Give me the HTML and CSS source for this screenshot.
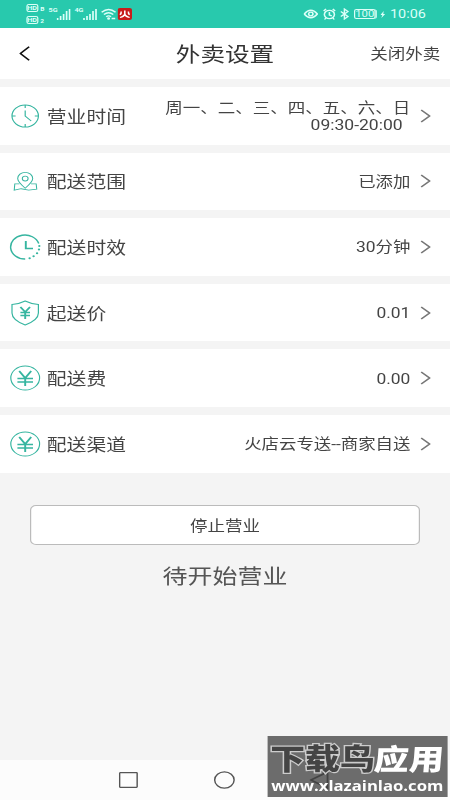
FILE: index.html
```html
<!DOCTYPE html>
<html lang="zh-CN">
<head>
<meta charset="utf-8">
<title>外卖设置</title>
<link rel="stylesheet" href="styles.css">
</head>
<body>
<svg class="defs" aria-hidden="true">
  <symbol id="chevron" viewBox="0 0 9 14"><path d="M1 1 8 7 1 13"/></symbol>
  <symbol id="yuan" viewBox="0 0 26 26"><circle cx="13" cy="13" r="12"/><path class="thick" d="M8 6l5 7 5-7M13 13v8M6.500 13.500h13M6.500 17h13"/></symbol>
</svg>
<div class="screen">
  <div class="status">
    <div class="hd"><span><b>HD</b><i>B</i></span><span><b>HD</b><i>2</i></span></div>
    <div class="net net5">5G</div>
    <svg class="signal" viewBox="0 0 12 12"><path d="M1 12v-2M3.500 12V8M6 12V6M8.500 12V3M11 12V1"/></svg>
    <div class="net net4">4G</div>
    <svg class="signal" viewBox="0 0 12 12"><path d="M1 12v-2M3.500 12V8M6 12V6M8.500 12V3M11 12V1"/></svg>
    <svg class="wifi" viewBox="0 0 13 12"><path d="M.7 4.300Q6.500-1.300 12.300 4.300M2.600 6.600q3.900-3.600 7.800 0M4.500 8.800q2-1.800 4 0M9 10.500h3"/><circle cx="6.500" cy="10.500" r=".6"/></svg>
    <svg class="fire" viewBox="0 0 12 12"><rect width="12" height="12" rx="2"/><path d="M6 2.500V6Q5.500 8.500 2 9.500M6 6q.5 2.500 4 3.500M3 3.500q.2 2-1 3.300M9 3.500q-.2 2 1 3.300"/></svg>
    <div class="spacer"></div>
    <svg class="eye" viewBox="0 0 12 10"><path d="M.5 5Q6-2.500 11.500 5 6 12.500.5 5z"/><circle cx="6" cy="5" r="1.800"/></svg>
    <svg class="alarm" viewBox="0 0 11 12"><circle cx="5.500" cy="6.500" r="4.200"/><path d="M5.500 4v3l2 .8M.7 3l2-2M10.300 3l-2-2M2.500 10l-1 1.500M8.500 10l1 1.500"/></svg>
    <svg class="bt" viewBox="0 0 8 12"><path d="M1 3.500l6 5L4 11V1l3 2.500-6 5"/></svg>
    <div class="battery">100</div>
    <svg class="bolt" viewBox="0 0 5 9"><path d="M3.500 0L0 5h2L1 9l4-5H3z"/></svg>
    <div class="time">10:06</div>
  </div>

  <div class="header">
    <svg class="back" viewBox="0 0 9 15"><path d="M8.300.7 1 7.500l7.300 6.800"/></svg>
    <div class="title">外卖设置</div>
    <div class="close">关闭外卖</div>
  </div>

  <div class="list">
    <div class="row">
      <svg class="icon" viewBox="0 0 26 26"><circle cx="13" cy="13" r="11"/><path d="M13 7.500V13l5 5M13 2v3M13 21v3M2 13h3M21 13h3"/></svg>
      <div class="label">营业时间</div>
      <div class="value two"><div>周一、二、三、四、五、六、日</div><div class="hours">09:30-20:00</div></div>
      <svg class="chevron"><use href="#chevron"/></svg>
    </div>
    <div class="row">
      <svg class="icon pin" viewBox="-.5 -1 27 27"><path d="M13 20q-6.500-6.500-6.500-10a6.500 6.500 0 0 1 13 0q0 3.500-6.500 10z"/><circle cx="13" cy="10" r="2.500"/><path d="M8 15.500H4L3.500 22l6-1.500 6.500 1.500 7-1-.5-5.500H18"/></svg>
      <div class="label">配送范围</div>
      <div class="value">已添加</div>
      <svg class="chevron"><use href="#chevron"/></svg>
    </div>
    <div class="row">
      <svg class="icon" viewBox="0 0 26 26"><path class="thin" d="M24.300 9.500A12 12 0 1 0 13 25"/><path class="thick" d="M13.500 7v7.500h6"/><path class="dots" d="M24.800 12v.01M24.500 15.500v.01M22.900 19.300v.01M20 22.300v.01M16.700 24.200v.01"/></svg>
      <div class="label">配送时效</div>
      <div class="value">30分钟</div>
      <svg class="chevron"><use href="#chevron"/></svg>
    </div>
    <div class="row">
      <svg class="icon" viewBox="0 0 26 26"><path d="M13 1q5 3 11 3.500V13q0 7-11 12Q2 20 2 13V4.500Q8 4 13 1z"/><path class="thick" d="M9 7l4 5 4-5M13 12v7M9 12.500h8M9 15.500h8"/></svg>
      <div class="label">起送价</div>
      <div class="value">0.01</div>
      <svg class="chevron"><use href="#chevron"/></svg>
    </div>
    <div class="row">
      <svg class="icon" viewBox="0 0 26 26"><use href="#yuan"/></svg>
      <div class="label">配送费</div>
      <div class="value">0.00</div>
      <svg class="chevron"><use href="#chevron"/></svg>
    </div>
    <div class="row">
      <svg class="icon" viewBox="0 0 26 26"><use href="#yuan"/></svg>
      <div class="label">配送渠道</div>
      <div class="value">火店云专送--商家自送</div>
      <svg class="chevron"><use href="#chevron"/></svg>
    </div>
  </div>

  <div class="stop">停止营业</div>
  <div class="state">待开始营业</div>

  <div class="nav">
    <svg viewBox="0 0 16 16"><rect x=".7" y=".7" width="14.600" height="14.600" rx=".5"/></svg>
    <svg viewBox="0 0 18 18"><circle cx="9" cy="9" r="8.100"/></svg>
    <svg viewBox="0 0 16 18"><path d="M15 1v16L1 9z"/></svg>
  </div>
  <div class="watermark">
    <div class="brand"><span>下载鸟</span><em>应用</em></div>
    <div class="url">www.xlazainlao.com</div>
  </div>
</div>
</body>
</html>
```
FILE: styles.css
```css
* { box-sizing: border-box; }
html, body { margin: 0; overflow: hidden; }
body { width: 450px; height: 800px; background: #f4f4f4; }
svg { display: block; flex: none; fill: none; stroke: currentColor; }
.defs { position: absolute; width: 0; height: 0; }

/* 375-unit wide layout, widened to fill the 450px viewport */
.screen {
  position: relative;
  display: flex;
  flex-direction: column;
  width: 375px;
  height: 800px;
  transform: scaleX(1.2);
  transform-origin: 0 0;
  font-family: Roboto, "Noto Sans CJK SC", sans-serif;
  font-size: 14.5px;
  color: #444;
}

.status {
  display: flex;
  align-items: center;
  flex: none;
  height: 28px;
  padding: 0 21px 0 21.500px;
  background: #28c9ad;
  color: #dcfff8;
}
.hd { display: flex; flex-direction: column; gap: 4px; width: 17px; margin-right: 2px; }
.hd span { display: flex; align-items: flex-end; gap: 1.500px; height: 8px; }
.hd b { width: 10.500px; height: 8px; border: 1px solid; border-radius: 2px; font-size: 6px; line-height: 6px; text-align: center; }
.hd i { font: bold 5.500px/5px Roboto, sans-serif; }
.net { width: 6.500px; font-size: 6px; font-weight: bold; line-height: 8px; align-self: flex-start; margin-top: 6px; }
.signal { width: 12px; height: 12px; margin: 0 3px 0 0; stroke-width: 1.4; }
.wifi { width: 13px; height: 12px; margin-right: 3px; stroke-width: 1.3; }
.fire { width: 12px; height: 12px; margin-left: -2px; stroke: #fff; stroke-width: 1.3; }
.fire rect { fill: #c81c1c; stroke: none; }
.spacer { flex: 1; }
.eye { width: 12px; height: 10px; margin-right: 4px; stroke-width: 1.3; }
.alarm { width: 11px; height: 12px; margin-right: 3px; stroke-width: 1.3; }
.bt { width: 8px; height: 12px; margin-right: 4px; stroke-width: 1.2; }
.battery {
  width: 18px;
  height: 10px;
  border: 1px solid;
  border-radius: 2px;
  font-size: 9.500px;
  line-height: 8.500px;
  text-align: center;
  box-shadow: 1.500px 0 0 -0.500px #dcfff8;
}
.bolt { width: 4px; height: 9px; margin: 0 4px 0 4px; fill: currentColor; stroke: none; }
.time { font-size: 12px; line-height: 28px; width: 29px; white-space: nowrap; }

.header {
  display: grid;
  grid-template-columns: 1fr auto 1fr;
  align-items: center;
  flex: none;
  height: 51px;
  padding: 0 8px 0 16px;
  background: #fff;
}
.back { width: 9px; height: 15px; stroke: #111; stroke-width: 1.5; }
.title { font-size: 20.500px; line-height: 30px; color: #333; margin: 2px 8px 0 0; }
.close { justify-self: end; font-size: 14.600px; line-height: 20px; }

.list { display: flex; flex-direction: column; gap: 8px; margin-top: 8px; }
.row {
  display: flex;
  align-items: center;
  height: 57.600px;
  padding: 0 16px 0 8px;
  background: #fff;
}
.icon { width: 26px; height: 26px; color: #36b5a0; stroke-width: 1; }
.pin { stroke-width: .9; }
.thick { stroke-width: 1.6; }
.thin { stroke-width: 1.3; }
.dots { stroke-width: 2; stroke-linecap: round; }
.label { margin-left: 5px; font-size: 16.500px; }
.value { margin-left: auto; padding-top: 2px; line-height: 17px; white-space: nowrap; }
.two { font-size: 14.600px; }
.hours { text-align: right; padding-right: 6.500px; }
.chevron { width: 9px; height: 14px; margin-left: 8px; stroke: #777; stroke-width: 1.5; }

.stop {
  flex: none;
  height: 40px;
  margin: 32.500px 25px 0;
  border: 1px solid #bbb;
  border-radius: 5px;
  background: #fff;
  font-size: 14.600px;
  line-height: 40px;
  text-align: center;
}
.state { margin-top: 17px; font-size: 20.800px; line-height: 30px; text-align: center; color: #555; }

.nav {
  display: flex;
  justify-content: space-between;
  align-items: center;
  height: 40px;
  margin-top: auto;
  padding: 0 101px 0 99px;
  background: #fcfcfc;
  color: #555;
}
.nav svg { width: 16px; height: 16px; stroke-width: 1.2; }
.nav svg:nth-child(2) { width: 18px; height: 18px; }
.nav svg:nth-child(3) { height: 20px; stroke: #000; stroke-width: 1.6; }

.watermark {
  position: absolute;
  left: 223px;
  top: 736px;
  width: 149.500px;
  height: 61px;
  background: rgba(80, 80, 80, .84);
  color: #fff;
  text-align: center;
  white-space: nowrap;
}
.brand {
  height: 40px;
  padding-top: 4px;
  font: 900 29px/35px "Noto Sans CJK SC", sans-serif;
}
.brand span { color: #444; -webkit-text-stroke: 2.500px #ccc; paint-order: stroke fill; }
.brand em { display: inline-block; font-style: normal; transform: skewX(-4deg); }
.url { font: bold 13.900px/19px "Open Sans", sans-serif; }
```
